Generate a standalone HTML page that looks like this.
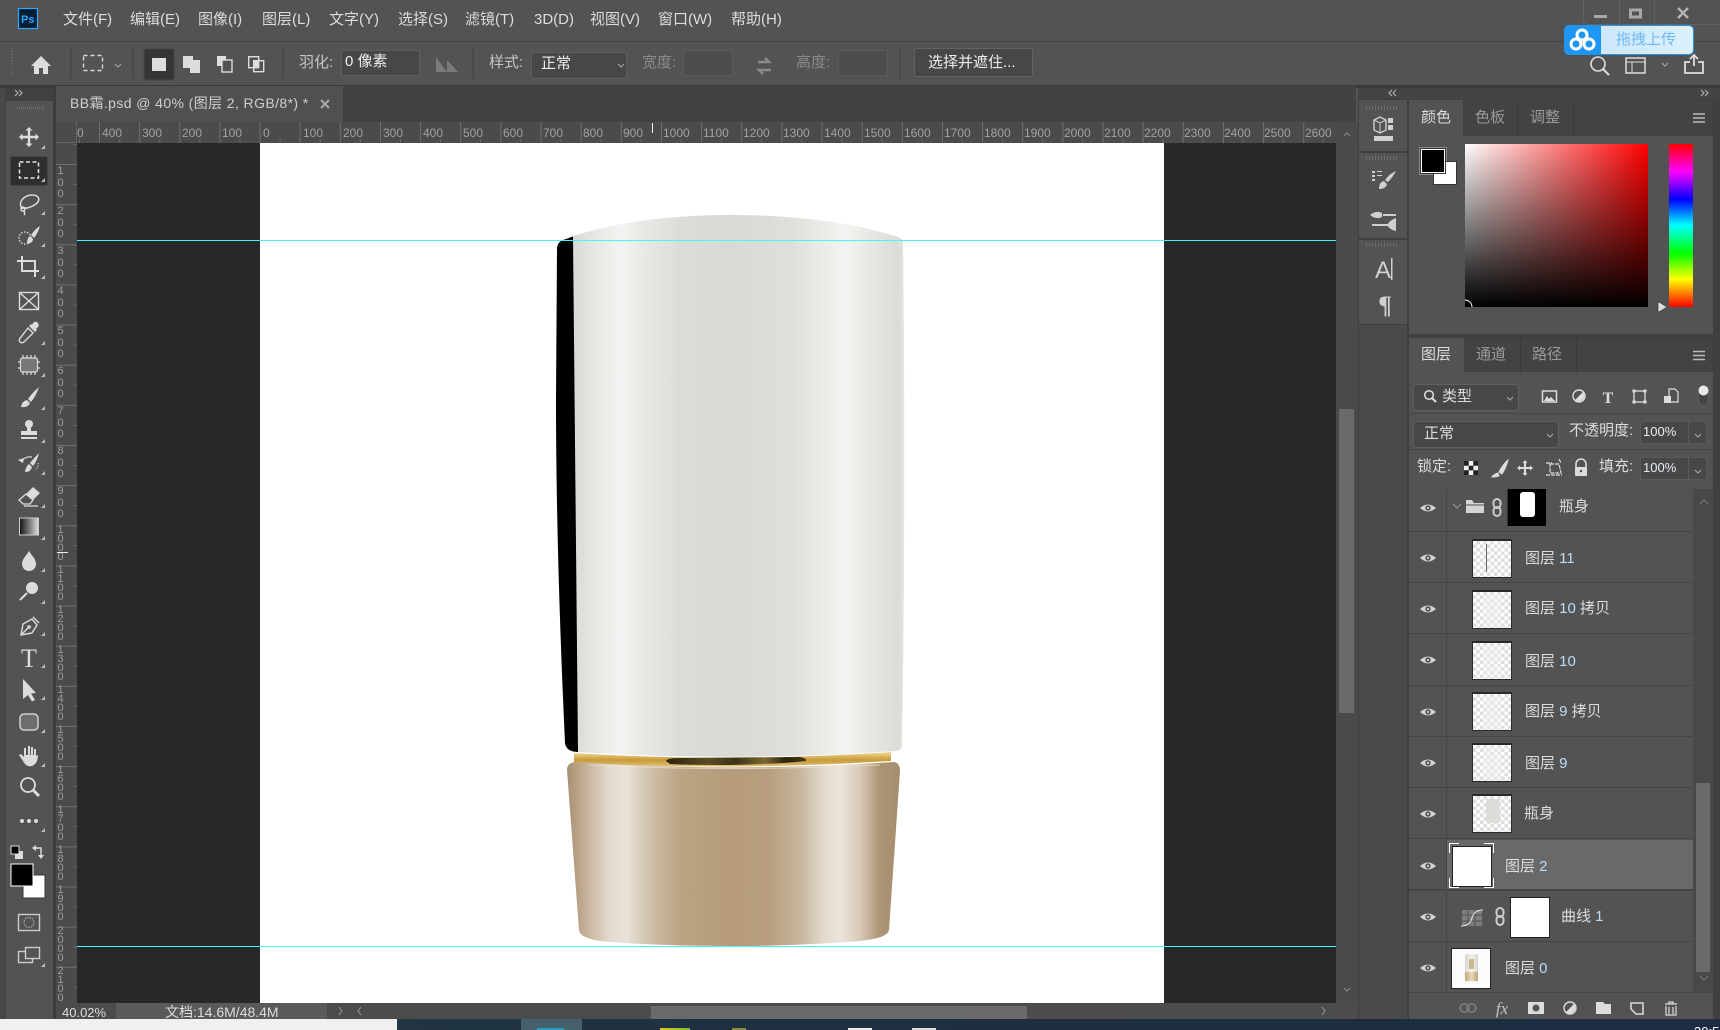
<!DOCTYPE html>
<html><head><meta charset="utf-8"><title>Photoshop</title>
<style>
html,body{margin:0;padding:0;background:#535353;width:1720px;height:1030px;overflow:hidden}
body{position:relative;font-family:"Liberation Sans","Noto Sans CJK SC",sans-serif;color:#dcdcdc;font-size:15px}
#page{position:absolute;left:0;top:0;width:1720px;height:1030px;overflow:hidden}
.b{position:absolute;box-sizing:border-box}
.t{position:absolute;white-space:nowrap;line-height:18px;font-size:15px}
.d{color:#8a8a8a}
.g{color:#b4b4b4}
.hr span{position:absolute;top:4px;font-size:12px;line-height:14px;color:#a2a2a2}
.vr span{position:absolute;left:0;width:9px;text-align:center;font-size:11px;color:#9c9c9c;line-height:11.7px}
.vr span.f{line-height:9px}
.chk{background:conic-gradient(#dedede 25%,#fff 0 50%,#dedede 0 75%,#fff 0) 0 0/7px 7px;border:1px solid #2a2a2a;border-top-width:2px;position:absolute;box-sizing:border-box;width:40px}
.sep{position:absolute;left:1409px;width:284px;height:1px;background:#454545}
.num{color:#bfdcf5}
svg{position:absolute;left:0;top:0}
</style></head><body><div id="page">
<!-- chrome -->
<div class="b" style="left:0;top:0;width:1720px;height:41px;background:#535353"></div>
<div class="b" style="left:0;top:41px;width:1720px;height:1px;background:#424242"></div>
<div class="b" style="left:0;top:42px;width:1720px;height:43px;background:#535353"></div>
<div class="b" style="left:0;top:85px;width:1720px;height:3px;background:#3a3a3a"></div>
<div class="b" style="left:1583px;top:0;width:137px;height:25px;border:1px solid #626262;border-top:0;border-right:0;border-radius:0 0 0 5px"></div>
<div class="b" style="left:1619px;top:0;width:1px;height:25px;background:#626262"></div>
<div class="b" style="left:1654px;top:0;width:1px;height:25px;background:#626262"></div>
<!-- tab row -->
<div class="b" style="left:56px;top:86px;width:1300px;height:36px;background:#424242"></div>
<div class="b" style="left:56px;top:86px;width:287px;height:36px;background:#505050"></div>
<!-- left toolbar -->
<div class="b" style="left:0;top:88px;width:56px;height:931px;background:#535353"></div>
<div class="b" style="left:0;top:88px;width:5px;height:931px;background:#484848"></div>
<div class="b" style="left:5px;top:88px;width:1px;height:931px;background:#3f3f3f"></div>
<div class="b" style="left:53px;top:88px;width:3px;height:931px;background:#3c3c3c"></div>
<div class="b" style="left:6px;top:88px;width:47px;height:13px;background:#414141"></div>
<div class="b" style="left:10px;top:156px;width:38px;height:30px;background:#2f2f2f;border:1px solid #454545;border-radius:2px"></div>
<!-- rulers -->
<div class="b hr" style="left:56px;top:122px;width:1280px;height:21px;background:#4b4b4b;overflow:hidden">
<div class="b" style="left:21px;top:0;width:1259px;height:21px;background:linear-gradient(90deg,#6f6f6f 1px,transparent 1px) 22px 0/40.15px 21px repeat-x"></div>
<div class="b" style="left:21px;top:17px;width:1259px;height:4px;background:linear-gradient(90deg,#686868 1px,transparent 1px) 2px 0/20.07px 4px repeat-x"></div>
<span style="left:21px">0</span><span style="left:46px">400</span><span style="left:86px">300</span><span style="left:126px">200</span><span style="left:166px">100</span>
<span style="left:207px">0</span><span style="left:247px">100</span><span style="left:287px">200</span><span style="left:327px">300</span><span style="left:367px">400</span><span style="left:407px">500</span><span style="left:447px">600</span><span style="left:487px">700</span><span style="left:527px">800</span><span style="left:567px">900</span><span style="left:607px">1000</span><span style="left:647px">1100</span><span style="left:687px">1200</span><span style="left:727px">1300</span><span style="left:768px">1400</span><span style="left:808px">1500</span><span style="left:848px">1600</span><span style="left:888px">1700</span><span style="left:928px">1800</span><span style="left:968px">1900</span><span style="left:1008px">2000</span><span style="left:1048px">2100</span><span style="left:1088px">2200</span><span style="left:1128px">2300</span><span style="left:1168px">2400</span><span style="left:1208px">2500</span><span style="left:1249px">2600</span>
<div class="b" style="left:596px;top:1px;width:1px;height:10px;background:#eee"></div>
</div>
<div class="b vr" style="left:56px;top:143px;width:21px;height:860px;background:#4b4b4b;overflow:hidden">
<div class="b" style="left:0;top:0;width:21px;height:860px;background:linear-gradient(#6f6f6f 1px,transparent 1px) 0 21px/21px 40.15px repeat-y"></div>
<div class="b" style="left:17px;top:0;width:4px;height:860px;background:linear-gradient(#686868 1px,transparent 1px) 0 1px/4px 20.07px repeat-y"></div>
<span style="left:0;top:23px">1<br>0<br>0</span><span style="top:63px">2<br>0<br>0</span><span style="top:103px">3<br>0<br>0</span><span style="top:143px">4<br>0<br>0</span><span style="top:183px">5<br>0<br>0</span><span style="top:223px">6<br>0<br>0</span><span style="top:263px">7<br>0<br>0</span><span style="top:303px">8<br>0<br>0</span><span style="top:343px">9<br>0<br>0</span>
<span class="f" style="top:383px">1<br>0<br>0<br>0</span><span class="f" style="top:423px">1<br>1<br>0<br>0</span><span class="f" style="top:463px">1<br>2<br>0<br>0</span><span class="f" style="top:503px">1<br>3<br>0<br>0</span><span class="f" style="top:543px">1<br>4<br>0<br>0</span><span class="f" style="top:583px">1<br>5<br>0<br>0</span><span class="f" style="top:623px">1<br>6<br>0<br>0</span><span class="f" style="top:663px">1<br>7<br>0<br>0</span><span class="f" style="top:703px">1<br>8<br>0<br>0</span><span class="f" style="top:743px">1<br>9<br>0<br>0</span><span class="f" style="top:784px">2<br>0<br>0<br>0</span><span class="f" style="top:824px">2<br>1<br>0<br>0</span>
<div class="b" style="left:1px;top:409px;width:11px;height:1px;background:#eee"></div>
</div>
<div class="b" style="left:56px;top:122px;width:21px;height:21px;background:#4b4b4b;border-right:1px dotted #777;border-bottom:1px dotted #777"></div>
<!-- canvas -->
<div class="b" style="left:77px;top:143px;width:1259px;height:860px;background:#282828"></div>
<div class="b" style="left:260px;top:143px;width:904px;height:860px;background:#fff"></div>
<!-- canvas vscroll -->
<div class="b" style="left:1336px;top:122px;width:22px;height:881px;background:#4a4a4a"></div>
<div class="b" style="left:1339px;top:409px;width:15px;height:304px;background:#6a6a6a"></div>
<!-- status -->
<div class="b" style="left:56px;top:1003px;width:1302px;height:16px;background:#4c4c4c"></div>
<div class="b" style="left:116px;top:1003px;width:211px;height:16px;background:#5a5a5a"></div>
<div class="b" style="left:651px;top:1006px;width:376px;height:13px;background:#6a6a6a"></div>
<div class="t" style="left:62px;top:1004px;font-size:13px;line-height:17px">40.02%</div>
<div class="t" style="left:165px;top:1004px;font-size:14px;line-height:17px;color:#ddd">文档:14.6M/48.4M</div>
<!-- right column -->
<div class="b" style="left:1358px;top:88px;width:362px;height:931px;background:#3f3f3f"></div>
<div class="b" style="left:1358px;top:88px;width:362px;height:11px;background:#444"></div>
<div class="b" style="left:1359px;top:100px;width:48px;height:51px;background:#535353"></div>
<div class="b" style="left:1359px;top:153px;width:48px;height:85px;background:#535353"></div>
<div class="b" style="left:1359px;top:240px;width:48px;height:84px;background:#535353"></div>
<div class="b" style="left:1359px;top:325px;width:48px;height:694px;background:#4a4a4a"></div>
<!-- color panel -->
<div class="b" style="left:1409px;top:100px;width:304px;height:234px;background:#535353"></div>
<div class="b" style="left:1463px;top:100px;width:250px;height:36px;background:#434343"></div>
<div class="b" style="left:1517px;top:100px;width:1px;height:36px;background:#3a3a3a"></div>
<div class="b" style="left:1573px;top:100px;width:1px;height:36px;background:#3a3a3a"></div>
<div class="t" style="left:1421px;top:109px">颜色</div>
<div class="t g" style="left:1475px;top:109px;color:#9a9a9a">色板</div>
<div class="t g" style="left:1530px;top:109px;color:#9a9a9a">调整</div>
<div class="b" style="left:1419px;top:147px;width:28px;height:28px;background:#8a8a8a"></div>
<div class="b" style="left:1433px;top:161px;width:24px;height:24px;background:#fff;border:1px solid #333"></div>
<div class="b" style="left:1421px;top:149px;width:24px;height:24px;background:#000;border:1px solid #fff;outline:1px solid #333"></div>
<div class="b" style="left:1465px;top:144px;width:183px;height:163px;background:linear-gradient(to top,#000,rgba(0,0,0,0)),linear-gradient(to right,#fff,#f00)"></div>
<div class="b" style="left:1669px;top:144px;width:24px;height:163px;background:linear-gradient(to bottom,#f00,#f0f 17%,#00f 34%,#0ff 50%,#0f0 67%,#ff0 83%,#f00)"></div>
<!-- layers panel -->
<div class="b" style="left:1409px;top:338px;width:304px;height:681px;background:#535353"></div>
<div class="b" style="left:1464px;top:338px;width:249px;height:34px;background:#434343"></div>
<div class="b" style="left:1520px;top:338px;width:1px;height:34px;background:#3a3a3a"></div>
<div class="b" style="left:1576px;top:338px;width:1px;height:34px;background:#3a3a3a"></div>
<div class="t" style="left:1421px;top:346px">图层</div>
<div class="t" style="left:1476px;top:346px;color:#9a9a9a">通道</div>
<div class="t" style="left:1532px;top:346px;color:#9a9a9a">路径</div>
<!-- filter row -->
<div class="b" style="left:1413px;top:384px;width:106px;height:27px;background:#474747;border:1px solid #5f5f5f;border-radius:3px"></div>
<div class="t" style="left:1442px;top:388px">类型</div>
<div class="b" style="left:1409px;top:413px;width:304px;height:1px;background:#454545"></div>
<div class="b" style="left:1413px;top:421px;width:146px;height:27px;background:#474747;border:1px solid #5f5f5f;border-radius:3px"></div>
<div class="t" style="left:1424px;top:425px">正常</div>
<div class="t" style="left:1569px;top:422px">不透明度:</div>
<div class="b" style="left:1640px;top:421px;width:67px;height:23px;background:#474747;border:1px solid #5a5a5a;border-radius:3px"></div>
<div class="b" style="left:1688px;top:421px;width:1px;height:23px;background:#5a5a5a"></div>
<div class="t" style="left:1643px;top:423px;font-size:13px;color:#e6eef5">100%</div>
<div class="b" style="left:1409px;top:449px;width:304px;height:1px;background:#454545"></div>
<div class="t" style="left:1417px;top:458px">锁定:</div>
<div class="t" style="left:1599px;top:458px">填充:</div>
<div class="b" style="left:1640px;top:457px;width:67px;height:23px;background:#474747;border:1px solid #5a5a5a;border-radius:3px"></div>
<div class="b" style="left:1688px;top:457px;width:1px;height:23px;background:#5a5a5a"></div>
<div class="t" style="left:1643px;top:459px;font-size:13px;color:#e6eef5">100%</div>
<!-- layer list -->
<div class="b" style="left:1693px;top:489px;width:20px;height:503px;background:#494949"></div>
<div class="b" style="left:1696px;top:783px;width:14px;height:189px;background:#6a6a6a"></div>
<div class="b" style="left:1447px;top:840px;width:246px;height:49px;background:#696969"></div>
<div class="b" style="left:1446px;top:489px;width:1px;height:503px;background:#454545"></div>
<div class="sep" style="top:531px"></div><div class="sep" style="top:582px"></div><div class="sep" style="top:633px"></div><div class="sep" style="top:685px"></div><div class="sep" style="top:736px"></div><div class="sep" style="top:787px"></div><div class="sep" style="top:838px"></div><div class="sep" style="top:889px;height:2px"></div><div class="sep" style="top:941px"></div><div class="sep" style="top:992px;width:304px"></div>
<!-- thumbs -->
<div class="b" style="left:1507px;top:489px;width:39px;height:37px;background:#000;border-left:1px solid #333">
 <div class="b" style="left:12px;top:3px;width:15px;height:25px;background:#fff;border-radius:3px"></div></div>
<div class="chk" style="left:1472px;top:539px;height:39px"><div class="b" style="left:13px;top:3px;width:1px;height:28px;background:#666"></div></div>
<div class="chk" style="left:1472px;top:590px;height:39px"><div class="b" style="left:10px;top:2px;width:18px;height:33px;background:rgba(240,240,238,.45)"></div></div>
<div class="chk" style="left:1472px;top:641px;height:39px"><div class="b" style="left:10px;top:2px;width:18px;height:33px;background:rgba(240,240,238,.45)"></div></div>
<div class="chk" style="left:1472px;top:692px;height:39px"><div class="b" style="left:10px;top:2px;width:18px;height:33px;background:rgba(240,240,238,.45)"></div></div>
<div class="chk" style="left:1472px;top:743px;height:39px"><div class="b" style="left:10px;top:2px;width:18px;height:33px;background:rgba(240,240,238,.45)"></div></div>
<div class="chk" style="left:1472px;top:794px;height:39px"><div class="b" style="left:13px;top:3px;width:14px;height:24px;background:#dcdcd8;border-radius:2px"></div></div>
<div class="b" style="left:1452px;top:846px;width:40px;height:41px;background:#fff;border:1px solid #222"></div>
<div class="b" style="left:1510px;top:897px;width:40px;height:41px;background:#fff;border:1px solid #222"></div>
<div class="b" style="left:1451px;top:948px;width:40px;height:41px;background:#fbfbfb;border:1px solid #222">
 <div class="b" style="left:13px;top:5px;width:13px;height:18px;background:linear-gradient(90deg,#d8d6cf,#f2f1ee,#d6d4ce);border-radius:2px 2px 0 0"></div>
 <div class="b" style="left:17px;top:10px;width:5px;height:10px;background:#cdb98f"></div>
 <div class="b" style="left:13px;top:23px;width:13px;height:9px;background:linear-gradient(90deg,#c2a877,#e6d9bd,#bfa472)"></div>
</div>
<!-- layer names -->
<div class="t" style="left:1559px;top:498px">瓶身</div>
<div class="t" style="left:1525px;top:550px">图层 <span class="num">11</span></div>
<div class="t" style="left:1525px;top:600px">图层 <span class="num">10</span> 拷贝</div>
<div class="t" style="left:1525px;top:653px">图层 <span class="num">10</span></div>
<div class="t" style="left:1525px;top:703px">图层 <span class="num">9</span> 拷贝</div>
<div class="t" style="left:1525px;top:755px">图层 <span class="num">9</span></div>
<div class="t" style="left:1524px;top:805px">瓶身</div>
<div class="t" style="left:1505px;top:858px">图层 <span class="num">2</span></div>
<div class="t" style="left:1561px;top:908px">曲线 <span class="num">1</span></div>
<div class="t" style="left:1505px;top:960px">图层 <span class="num">0</span></div>
<!-- options text -->
<div class="t" style="left:299px;top:54px;color:#c6c6c6">羽化:</div>
<div class="b" style="left:341px;top:50px;width:79px;height:26px;background:#474747;border:1px solid #5f5f5f"></div>
<div class="t" style="left:345px;top:53px;color:#eee">0 像素</div>
<div class="t" style="left:489px;top:54px;color:#c6c6c6">样式:</div>
<div class="b" style="left:531px;top:52px;width:96px;height:27px;background:#474747;border:1px solid #5f5f5f;border-radius:3px"></div>
<div class="t" style="left:541px;top:55px;color:#eee">正常</div>
<div class="t d" style="left:642px;top:54px">宽度:</div>
<div class="b" style="left:683px;top:50px;width:50px;height:26px;background:#4d4d4d;border:1px solid #5a5a5a"></div>
<div class="t d" style="left:796px;top:54px">高度:</div>
<div class="b" style="left:838px;top:50px;width:50px;height:26px;background:#4d4d4d;border:1px solid #5a5a5a"></div>
<div class="b" style="left:914px;top:48px;width:119px;height:29px;background:#474747;border:1px solid #636363;border-radius:3px"></div>
<div class="t" style="left:928px;top:54px;color:#eee">选择并遮住...</div>
<!-- upload -->
<div class="b" style="left:1564px;top:25px;width:130px;height:30px;border-radius:5px;background:linear-gradient(90deg,#1e96f5 0 36px,#cde7fb 36px,#dcf0fd);border:1px solid #1e96f5"></div>
<div class="t" style="left:1616px;top:31px;color:#6fbaf0">拖拽上传</div>
<!-- menu -->
<div class="t" style="left:63px;top:11px">文件(F)</div>
<div class="t" style="left:130px;top:11px">编辑(E)</div>
<div class="t" style="left:198px;top:11px">图像(I)</div>
<div class="t" style="left:262px;top:11px">图层(L)</div>
<div class="t" style="left:329px;top:11px">文字(Y)</div>
<div class="t" style="left:398px;top:11px">选择(S)</div>
<div class="t" style="left:465px;top:11px">滤镜(T)</div>
<div class="t" style="left:534px;top:11px">3D(D)</div>
<div class="t" style="left:590px;top:11px">视图(V)</div>
<div class="t" style="left:658px;top:11px">窗口(W)</div>
<div class="t" style="left:731px;top:11px">帮助(H)</div>
<!-- doc tab -->
<div class="t" style="left:70px;top:94px;font-size:14px;color:#cfcfcf;letter-spacing:.4px">BB霜.psd @ 40% (图层 2, RGB/8*) *</div>
<!-- taskbar -->
<div class="b" style="left:0;top:1019px;width:1720px;height:11px;overflow:hidden;background:linear-gradient(90deg,#253a42,#1e2f40 50%,#1d2c42)">
<div class="t" style="left:1694px;top:4px;font-size:13px;color:#fff">20:5</div>
</div>
<div class="b" style="left:0;top:1019px;width:397px;height:11px;background:#f0f0f0"></div>
<div class="b" style="left:521px;top:1019px;width:61px;height:11px;background:#46606b"></div>
<div class="b" style="left:537px;top:1028px;width:27px;height:2px;background:#2a9bc0"></div>
<div class="b" style="left:660px;top:1028px;width:30px;height:2px;background:linear-gradient(90deg,#e6c21e,#7cc13a)"></div>
<div class="b" style="left:732px;top:1028px;width:14px;height:2px;background:#8a8a3a"></div>
<div class="b" style="left:848px;top:1028px;width:24px;height:2px;background:#eee"></div>
<div class="b" style="left:912px;top:1028px;width:24px;height:2px;background:#ddd"></div>

<svg width="1720" height="1030" viewBox="0 0 1720 1030" fill="none">
<defs>
<linearGradient id="bd" gradientUnits="userSpaceOnUse" x1="573" x2="905" y1="0" y2="0">
<stop offset="0" stop-color="#d9d9d5"/><stop offset=".05" stop-color="#e3e3e0"/><stop offset=".14" stop-color="#f3f3f1"/><stop offset=".2" stop-color="#eaeae7"/><stop offset=".32" stop-color="#dcdcd8"/><stop offset=".47" stop-color="#d9d9d5"/><stop offset=".65" stop-color="#dededa"/><stop offset=".74" stop-color="#e9e9e6"/><stop offset=".82" stop-color="#f3f3f1"/><stop offset=".89" stop-color="#e8e8e4"/><stop offset=".98" stop-color="#dbdbd7"/><stop offset="1" stop-color="#e6e6e3"/>
</linearGradient>
<linearGradient id="cp" gradientUnits="userSpaceOnUse" x1="567" x2="900" y1="0" y2="0">
<stop offset="0" stop-color="#a88f70"/><stop offset=".05" stop-color="#c2ad94"/><stop offset=".13" stop-color="#e4dbd0"/><stop offset=".18" stop-color="#e9e2d9"/><stop offset=".25" stop-color="#cfc0aa"/><stop offset=".34" stop-color="#bba483"/><stop offset=".49" stop-color="#b59b7a"/><stop offset=".61" stop-color="#b89f7f"/><stop offset=".7" stop-color="#c7b59d"/><stop offset=".77" stop-color="#e3dacd"/><stop offset=".82" stop-color="#eae4da"/><stop offset=".88" stop-color="#d8cab8"/><stop offset=".94" stop-color="#ad9474"/><stop offset="1" stop-color="#a68d6d"/>
</linearGradient>
<linearGradient id="gd" gradientUnits="userSpaceOnUse" x1="0" x2="0" y1="752" y2="768">
<stop offset="0" stop-color="#f2dc95"/><stop offset=".5" stop-color="#c99a3a"/><stop offset="1" stop-color="#e3c77e"/>
</linearGradient>
<linearGradient id="dk" gradientUnits="userSpaceOnUse" x1="666" x2="807" y1="0" y2="0">
<stop offset="0" stop-color="#2a230e"/><stop offset=".3" stop-color="#5a4d24"/><stop offset=".5" stop-color="#3b3217"/><stop offset=".7" stop-color="#7a6a30"/><stop offset=".85" stop-color="#2a230e"/><stop offset="1" stop-color="#4a3d18"/>
</linearGradient>
<linearGradient id="gr" x1="0" x2="1" y1="0" y2="0"><stop offset="0" stop-color="#111"/><stop offset="1" stop-color="#ddd"/></linearGradient>
</defs>
<!-- bottle -->
<path d="M574 753Q730 763 891 752L891 761Q730 771 574 763Z" fill="url(#gd)"/>
<path d="M666 761Q667 758 680 758L800 757Q807 758 806 761Q780 764 730 765Q690 765 670 764Z" fill="url(#dk)"/>
<path d="M567 770Q567 763 575 762Q730 773 894 762Q900 763 900 771L889 930Q888 938 860 941Q800 946 730 946Q650 946 600 941Q580 938 579 930Z" fill="url(#cp)"/>
<path d="M590 765Q730 772 880 765" stroke="#eee3d6" stroke-width="1" opacity=".7"/>
<path d="M557 249Q557 241 566 239L574 236L579 752Q566 752 565 743Q556 550 556 400Z" fill="#000"/>
<path d="M573 236Q640 215 730 215Q830 215 898 237Q903 238 903 244Q906 500 902 745Q902 750 896 751Q740 762 578 752Z" fill="url(#bd)"/>
<rect x="77" y="240" width="1259" height="1" fill="#40f8f8"/>
<rect x="77" y="946" width="1259" height="1" fill="#40f8f8"/>

<!-- Ps logo -->
<rect x="18.500" y="8.500" width="19" height="20" fill="#001e36" stroke="#31a8ff" stroke-width="1.200"/>
<text x="21" y="23" font-family="Liberation Sans" font-size="11" font-weight="bold" fill="#31a8ff">Ps</text>
<!-- window buttons -->
<rect x="1594" y="15" width="13" height="3" fill="#a8a8a8"/>
<rect x="1630.500" y="10" width="10" height="7" stroke="#a8a8a8" stroke-width="3"/>
<path d="M1678 8L1688 18M1688 8L1678 18" stroke="#b4b4b4" stroke-width="2.400"/>
<!-- upload cloud -->
<g stroke="#fff" stroke-width="3"><circle cx="1582" cy="35" r="5"/><circle cx="1576" cy="44" r="5"/><circle cx="1589" cy="44" r="5"/></g>
<!-- options icons -->
<path d="M41 56L51 66H48V74H43V68H39V74H34V66H31Z" fill="#ddd"/>
<path d="M12 48v30" stroke="#666" stroke-dasharray="1 2" stroke-width="2"/>
<path d="M71 48V79M133 48V79M283 48V79M473 48V79M900 48V79" stroke="#414141"/>
<rect x="83.500" y="55.500" width="19" height="15" stroke="#d8d8d8" stroke-width="1.400" stroke-dasharray="4 3"/>
<path d="M115 64l3 3 3-3M618 64l3 3 3-3M1662 63l3 3 3-3" stroke="#aaa"/>
<rect x="144" y="49" width="30" height="31" rx="2" fill="#353535" stroke="#454545"/>
<rect x="152" y="58" width="14" height="13" fill="#ddd"/>
<path d="M183 56H193V60H200V73H190V68H183Z" fill="#ddd"/>
<rect x="217" y="56" width="9" height="10" fill="#ddd"/><rect x="222" y="60" width="10" height="12" fill="#535353" stroke="#ddd" stroke-width="1.400"/>
<rect x="248.700" y="56.700" width="10" height="11" stroke="#ddd" stroke-width="1.400"/><rect x="253.700" y="60.700" width="10" height="11" stroke="#ddd" stroke-width="1.400"/><rect x="253.700" y="60.700" width="5" height="7" fill="#ddd"/>
<path d="M436 72V57L447 72ZM447 72V60L458 72Z" fill="#7a7a7a"/>
<path d="M758 62H769L765 58M771 70H759L763 74" stroke="#8a8a8a" stroke-width="2.500"/>
<!-- search etc -->
<circle cx="1598" cy="64" r="7" stroke="#ddd" stroke-width="1.600"/><path d="M1603 69L1609 75" stroke="#ddd" stroke-width="2"/>
<rect x="1626" y="58" width="19" height="15" stroke="#ddd" stroke-width="1.500"/><path d="M1626 62H1645M1632 62V73" stroke="#ddd"/>
<path d="M1690 62H1685V73H1703V62H1698M1694 66V55M1690 59L1694 55L1698 59" stroke="#ddd" stroke-width="1.800"/>
<!-- close x -->
<path d="M321 100L329 108M329 100L321 108" stroke="#aaa" stroke-width="2"/>
<path d="M15 90l3 3-3 3M19 90l3 3-3 3" stroke="#bbb"/>
<path d="M17 108H44" stroke="#6a6a6a" stroke-width="3" stroke-dasharray="1 1"/>
<path d="M1392 90l-3 3 3 3M1396 90l-3 3 3 3M1701 90l3 3-3 3M1705 90l3 3-3 3" stroke="#bbb"/>
<path d="M1366 108H1398M1366 158H1398M1366 245H1398" stroke="#6e6e6e" stroke-width="4" stroke-dasharray="1 2"/>
<!-- tools -->
<g fill="#dcdcdc" stroke="none">
<g transform="translate(29,137)"><path d="M0-10L3.500-6.500H1.200V-1.200H6.500V-3.500L10 0L6.500 3.500V1.200H1.200V6.500H3.500L0 10L-3.500 6.500H-1.200V1.200H-6.500V3.500L-10 0L-6.500-3.500V-1.200H-1.200V-6.500H-3.500Z"/></g>
<g transform="translate(29,170)"><rect x="-9.500" y="-8" width="19" height="16" fill="none" stroke="#e4e4e4" stroke-width="1.500" stroke-dasharray="4 2.500"/></g>
<g transform="translate(29,203)" fill="none" stroke="#dcdcdc" stroke-width="1.500"><path d="M-7 5C-12-1-4-8 3-8C10-8 12-3 7 1C3 4-3 6-7 5Z"/><circle cx="-6" cy="6" r="2"/><path d="M-5 8C-4 10-4 11-5 12"/></g>
<g transform="translate(29,236)"><circle cx="-4" cy="2" r="6" fill="none" stroke="#dcdcdc" stroke-width="1.400" stroke-dasharray="1.500 1.500"/><path d="M11-10Q6-7 2-1L5 2Q9-3 11-10ZM1 0Q-2 2-2 8Q4 7 4 3Z"/></g>
<g transform="translate(29,267)" fill="none" stroke="#dcdcdc" stroke-width="2"><path d="M-7-11V4H10M-12-6H6V10"/></g>
<g transform="translate(29,301)" fill="none" stroke="#dcdcdc" stroke-width="1.400"><rect x="-9.500" y="-8.500" width="19" height="17"/><path d="M-9.500-8.500L9.500 8.500M9.500-8.500L-9.500 8.500"/></g>
<g transform="translate(29,333)"><path d="M4-10A3 3 0 0 1 9-6L7-4L8-3L6-1L0-7L2-9L3-8Z"/><path d="M-1-5L4 0L-4 8Q-7 11-9 9Q-11 7-8 4Z" fill="none" stroke="#dcdcdc" stroke-width="1.400"/></g>
<g transform="translate(29,365)"><rect x="-8.500" y="-7" width="17" height="14" rx="2" fill="#777" stroke="#dcdcdc" stroke-width="1.200"/><path d="M-6-10V-7M-2-10V-7M2-10V-7M6-10V-7M-6 7V10M-2 7V10M2 7V10M6 7V10M-11-3H-8M-11 3H-8M8-3H11M8 3H11" stroke="#dcdcdc" stroke-width="1.200"/></g>
<g transform="translate(29,398)"><path d="M10-11Q4-6-1 1L2 4Q7-2 10-11ZM-2 2Q-7 3-8 9Q-1 10 1 5Z"/></g>
<g transform="translate(29,431)"><circle cx="0" cy="-7" r="4"/><path d="M-2-4L-2 0H-8V4H8V0H2L2-4ZM-8 6H8V8H-8Z"/></g>
<g transform="translate(29,463)"><path d="M10-10Q5-5 1 0L4 3Q8-2 10-10ZM0 1Q-3 3-4 9Q2 9 3 4Z"/><path d="M-8-2Q-3-7 3-6" fill="none" stroke="#dcdcdc" stroke-width="1.200"/><path d="M-11-3L-5-5L-6 0Z"/><path d="M9 0Q10 4 6 7" fill="none" stroke="#dcdcdc" stroke-dasharray="1 1"/></g>
<g transform="translate(29,497)"><path d="M4-10L11-4L4 3L-3-3Z"/><path d="M-3-3L4 3L1 7H-6L-10 3Z" fill="none" stroke="#dcdcdc" stroke-width="1.300"/><path d="M-5 9H9" stroke="#dcdcdc" stroke-width="1.300"/></g>
<g transform="translate(29,527)"><rect x="-9.500" y="-9" width="19" height="17" fill="url(#gr)" stroke="#ccc"/></g>
<g transform="translate(29,561)"><path d="M0-10C3-5 7-2 7 3A7 7 0 0 1-7 3C-7-2-3-5 0-10Z"/></g>
<g transform="translate(29,592)"><circle cx="3" cy="-4" r="6"/><path d="M-2 1L-9 8" stroke="#dcdcdc" stroke-width="2"/></g>
<g transform="translate(29,626)" fill="none" stroke="#dcdcdc" stroke-width="1.400"><path d="M-8 9L-6-2L3-7L8-1L3 7Z"/><path d="M-8 9L-1 2"/><path d="M4-9L10-3"/><circle cx="0" cy="1" r="1.200"/></g>
<text x="29" y="667" text-anchor="middle" font-family="Liberation Serif" font-size="26" fill="#dcdcdc">T</text>
<g transform="translate(29,690)"><path d="M-6-11L7 3L2 3.500L6 10L3 11.500L-1 5L-6 9Z"/></g>
<g transform="translate(29,722)"><rect x="-9" y="-8" width="18" height="16" rx="4" fill="#6e6e6e" stroke="#d0d0d0" stroke-width="1.500"/></g>
<g transform="translate(29,756)"><path d="M-1-10H1V-1H2V-9H4V-1H5V-7H7V0L9-1Q9 5 6 8Q3 11-1 10Q-4 9-6 5L-10-1L-8-2L-5 1V-8H-3V-1H-1Z"/></g>
<g transform="translate(29,787)" fill="none" stroke="#dcdcdc"><circle cx="-1" cy="-2" r="7" stroke-width="1.800"/><path d="M4 3L10 9" stroke-width="3"/></g>
<circle cx="22" cy="821" r="2"/><circle cx="29" cy="821" r="2"/><circle cx="36" cy="821" r="2"/>
<rect x="15" y="851" width="8" height="8" fill="#ddd"/><rect x="11" y="846" width="8" height="8" fill="#000" stroke="#ddd"/>
<path d="M35 848H41V856" stroke="#ddd" stroke-width="1.400" fill="none"/><path d="M36 845V851L32 848ZM38 855H44L41 859Z" fill="#ddd"/>
<rect x="23" y="875" width="22" height="23" fill="#fff" stroke="#333"/>
<rect x="11" y="864" width="22" height="22" fill="#000" stroke="#fff"/>
<rect x="18.500" y="914.500" width="21" height="16" fill="none" stroke="#ccc" stroke-width="1.400"/><circle cx="29" cy="922.500" r="5" fill="none" stroke="#ccc" stroke-dasharray="1.200 1.200"/>
<rect x="18.500" y="951.500" width="14" height="11" fill="none" stroke="#ccc" stroke-width="1.400"/><rect x="25.500" y="947.500" width="14" height="11" fill="#535353" stroke="#ccc" stroke-width="1.400"/>
<!-- tool corner triangles -->
<path d="M41 149l4-4v4zM41 182l4-4v4zM41 215l4-4v4zM41 247l4-4v4zM41 279l4-4v4zM41 345l4-4v4zM41 377l4-4v4zM41 410l4-4v4zM41 443l4-4v4zM41 475l4-4v4zM41 508l4-4v4zM41 540l4-4v4zM41 572l4-4v4zM41 604l4-4v4zM41 636l4-4v4zM41 668l4-4v4zM41 700l4-4v4zM41 733l4-4v4zM41 767l4-4v4zM41 832l4-4v4zM41 967l4-4v4z" fill="#bbb"/>
</g>
<!-- right dock icons -->
<g transform="translate(1380,127)" fill="#d0d0d0"><path d="M-6-7L0-10L6-7V3L0 6L-6 3Z" fill="none" stroke="#d0d0d0" stroke-width="1.400"/><path d="M-6-7L0-4L6-7M0-4V6" stroke="#d0d0d0" fill="none"/><rect x="8" y="-9" width="5" height="5"/><rect x="8" y="-2" width="5" height="5"/><rect x="-6" y="9" width="19" height="5"/></g>
<g transform="translate(1384,180)" fill="#d0d0d0"><path d="M12-9Q5-6 1 0L4 2Q9-3 12-9ZM0 1Q-5 2-5 9Q2 9 3 4Z"/><rect x="-12" y="-9" width="3" height="2"/><rect x="-12" y="-5" width="3" height="2"/><rect x="-12" y="-1" width="3" height="2"/><rect x="-7" y="-9" width="5" height="1"/><rect x="-7" y="-5" width="5" height="1"/></g>
<g transform="translate(1384,219)" fill="#d0d0d0"><path d="M-14-4Q-8-9-2-6L-2-2Q-8 1-14-4ZM-1-5H12V-3H-1ZM-12 5H4V7H-12ZM12-1V12Q6 11 3 6Q6 1 12-1Z"/></g>
<text x="1375" y="278" font-family="Liberation Sans" font-size="24" fill="#d0d0d0">A</text><rect x="1391" y="258" width="1.500" height="22" fill="#d0d0d0"/>
<text x="1385" y="313" text-anchor="middle" font-family="Liberation Serif" font-size="25" font-weight="bold" fill="#d0d0d0">¶</text>
<!-- menus -->
<path d="M1693 114H1705M1693 118H1705M1693 122H1705M1693 351.500H1705M1693 355.500H1705M1693 359.500H1705" stroke="#bbb" stroke-width="1.600"/>
<!-- color markers -->
<path d="M1465 300A7 7 0 0 1 1472 307" stroke="#fff" stroke-width="1"/>
<path d="M1659 302L1667 307L1659 312Q1658 312 1658 310V304Q1658 302 1659 302Z" fill="#ddd" stroke="#333" stroke-width=".6"/>
<!-- filter row icons -->
<circle cx="1429" cy="395" r="4.300" stroke="#ddd" stroke-width="1.500"/><path d="M1432 398L1436 402" stroke="#ddd" stroke-width="2"/>
<path d="M1507 397l3 3 3-3M1547 434l3 3 3-3M1695 434l3 3 3-3M1695 470l3 3 3-3" stroke="#aaa"/>
<rect x="1542.500" y="391" width="14" height="11" stroke="#ddd" stroke-width="1.500"/><path d="M1544 401L1547 396L1549 399L1551 397L1555 401Z" fill="#ddd"/>
<circle cx="1579" cy="396" r="6" stroke="#ddd" stroke-width="1.400"/><path d="M1583.200 391.800A6 6 0 0 1 1574.800 400.200Z" fill="#ddd"/>
<text x="1608" y="403" text-anchor="middle" font-family="Liberation Serif" font-weight="bold" font-size="16" fill="#ddd">T</text>
<rect x="1634" y="391" width="11" height="11" stroke="#ddd" stroke-width="1.300"/><path d="M1632.500 389.500h3v3h-3zM1643.500 389.500h3v3h-3zM1632.500 400.500h3v3h-3zM1643.500 400.500h3v3h-3z" fill="#ddd"/>
<path d="M1669 389H1675L1678 392V402H1669Z" stroke="#ddd" stroke-width="1.200"/><rect x="1664" y="396" width="7" height="7" fill="#ddd"/>
<rect x="1698.500" y="386" width="10" height="20" rx="5" fill="#464646" stroke="#5e5e5e"/><circle cx="1703.500" cy="390.500" r="5" fill="#e8e8e8"/>
<!-- lock icons -->
<g transform="translate(1471,468)"><rect x="-7" y="-7" width="14" height="14" fill="#eee"/><path d="M-7-7h4.700v4.700h-4.700zM2.300-7h4.700v4.700h-4.700zM-2.300-2.300h4.700v4.700h-4.700zM-7 2.300h4.700v4.700h-4.700zM2.300 2.300h4.700v4.700h-4.700z" fill="#222"/></g>
<path d="M1508 460Q1503 464 1499 472L1502 474Q1506 468 1508 460ZM1498 473Q1494 474 1492 477Q1496 477 1499 476Z" fill="#ddd" stroke="#ddd"/>
<g transform="translate(1525,468)"><path d="M0-8L2.500-5H1V-1H5V-2.500L8 0L5 2.500V1H1V5H2.500L0 8L-2.500 5H-1V1H-5V2.500L-8 0L-5-2.500V-1H-1V-5H-2.500Z" fill="#ddd"/></g>
<g transform="translate(1554,468)" stroke="#ddd" stroke-width="1.200"><path d="M-4-4H5L7 5H-4ZM-8-5H-2M5-9L7-5M-8 7H8" fill="none" stroke-dasharray="4 1"/></g>
<path d="M1576 467V464A5 5 0 0 1 1586 464V467" stroke="#ddd" stroke-width="1.600"/><rect x="1575" y="467" width="12" height="9" rx="1" fill="#ddd"/><circle cx="1581" cy="471" r="1.300" fill="#535353"/>
<!-- list arrows -->
<path d="M1700 504l4-4 4 4M1700 976l4 4 4-4" stroke="#777"/>
<path d="M1344 136l3-3 3 3M1344 988l3 3 3-3" stroke="#8a8a8a"/>
<path d="M339 1007l3 4-3 4M361 1007l-3 4 3 4M1322 1007l3 4-3 4" stroke="#999"/>
<!-- eyes -->
<g id="eyes">
<g transform="translate(1428,508)"><path d="M-8 0Q0-7 8 0Q0 7-8 0Z" fill="#d4d4d4"/><circle r="2.700" fill="#535353"/><circle r="1.100" fill="#d4d4d4"/></g>
<g transform="translate(1428,558)"><path d="M-8 0Q0-7 8 0Q0 7-8 0Z" fill="#d4d4d4"/><circle r="2.700" fill="#535353"/><circle r="1.100" fill="#d4d4d4"/></g>
<g transform="translate(1428,609)"><path d="M-8 0Q0-7 8 0Q0 7-8 0Z" fill="#d4d4d4"/><circle r="2.700" fill="#535353"/><circle r="1.100" fill="#d4d4d4"/></g>
<g transform="translate(1428,660)"><path d="M-8 0Q0-7 8 0Q0 7-8 0Z" fill="#d4d4d4"/><circle r="2.700" fill="#535353"/><circle r="1.100" fill="#d4d4d4"/></g>
<g transform="translate(1428,712)"><path d="M-8 0Q0-7 8 0Q0 7-8 0Z" fill="#d4d4d4"/><circle r="2.700" fill="#535353"/><circle r="1.100" fill="#d4d4d4"/></g>
<g transform="translate(1428,763)"><path d="M-8 0Q0-7 8 0Q0 7-8 0Z" fill="#d4d4d4"/><circle r="2.700" fill="#535353"/><circle r="1.100" fill="#d4d4d4"/></g>
<g transform="translate(1428,814)"><path d="M-8 0Q0-7 8 0Q0 7-8 0Z" fill="#d4d4d4"/><circle r="2.700" fill="#535353"/><circle r="1.100" fill="#d4d4d4"/></g>
<g transform="translate(1428,866)"><path d="M-8 0Q0-7 8 0Q0 7-8 0Z" fill="#d4d4d4"/><circle r="2.700" fill="#535353"/><circle r="1.100" fill="#d4d4d4"/></g>
<g transform="translate(1428,917)"><path d="M-8 0Q0-7 8 0Q0 7-8 0Z" fill="#d4d4d4"/><circle r="2.700" fill="#535353"/><circle r="1.100" fill="#d4d4d4"/></g>
<g transform="translate(1428,968)"><path d="M-8 0Q0-7 8 0Q0 7-8 0Z" fill="#d4d4d4"/><circle r="2.700" fill="#535353"/><circle r="1.100" fill="#d4d4d4"/></g>
</g>
<!-- group row -->
<path d="M1453 504l4 4 4-4" stroke="#999"/>
<path d="M1466 500H1472L1474 503H1484V513H1466Z" fill="#d4d4d4"/><path d="M1466 505H1484" stroke="#535353"/>
<g stroke="#ccc" stroke-width="2" fill="none"><g transform="translate(1497,507)"><rect x="-3.500" y="-8" width="7" height="9" rx="3.500"/><rect x="-3.500" y="0" width="7" height="9" rx="3.500"/></g>
<g transform="translate(1500,916)"><rect x="-3.500" y="-8" width="7" height="9" rx="3.500"/><rect x="-3.500" y="0" width="7" height="9" rx="3.500"/></g></g>
<!-- active brackets -->
<path d="M1459 843.500H1449.500V853M1484 843.500H1493.500V853M1459 887.500H1449.500V878M1484 887.500H1493.500V878" stroke="#fff" stroke-width="1"/>
<!-- curves icon -->
<g transform="translate(1472,918)"><rect x="-10" y="-8" width="20" height="16" fill="#7d7d7d"/><path d="M-10-3H10M-10 3H10M-4-8V8M3-8V8" stroke="#535353"/><path d="M-11 8Q-2 8 0 0Q2-8 11-8" stroke="#e4e4e4"/></g>
<!-- bottom bar -->
<g transform="translate(1468,1008)" stroke="#7a7a7a" stroke-width="1.800"><rect x="-8" y="-4" width="9" height="8" rx="4"/><rect x="-1" y="-4" width="9" height="8" rx="4"/></g>
<text x="1502" y="1014" text-anchor="middle" font-family="Liberation Serif" font-style="italic" font-size="17" fill="#c4c4c4">fx</text>
<rect x="1528" y="1002" width="16" height="12" fill="#ddd"/><circle cx="1536" cy="1008" r="3.500" fill="#535353"/>
<circle cx="1570" cy="1008" r="6" stroke="#ddd" stroke-width="1.400"/><path d="M1574.200 1003.800A6 6 0 0 1 1565.800 1012.200Z" fill="#ddd"/>
<path d="M1596 1002H1603L1605 1004H1611V1014H1596Z" fill="#ddd"/>
<path d="M1631 1003H1643V1014H1636L1631 1009Z" stroke="#ddd" stroke-width="1.500"/>
<path d="M1665 1004H1677M1669 1004V1002H1673V1004M1666 1006V1015H1676V1006M1669 1007V1014M1673 1007V1014" stroke="#ddd" stroke-width="1.200"/>
</svg>
</div></body></html>
